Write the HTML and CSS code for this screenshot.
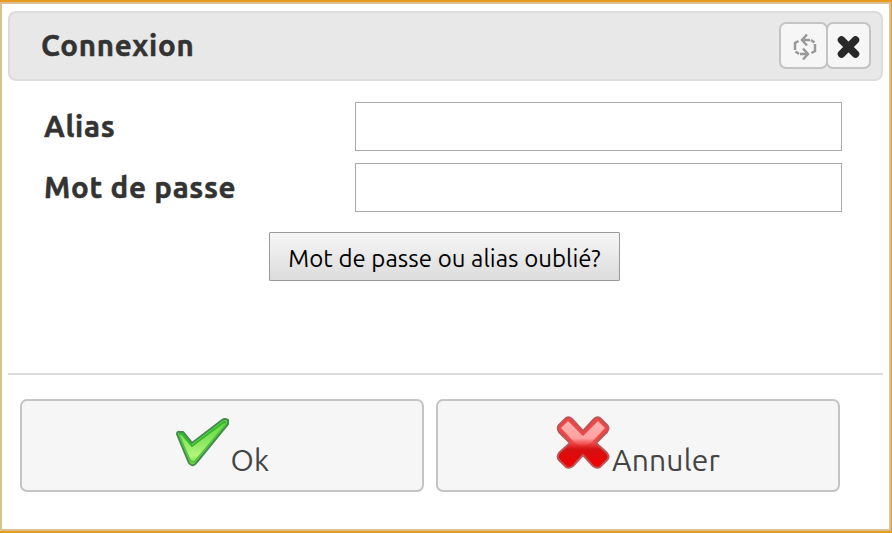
FILE: index.html
```html
<!DOCTYPE html>
<html lang="fr">
<head>
  <meta charset="UTF-8">
  <title>Connexion</title>
  <link rel="stylesheet" href="styles.css">
</head>
<body>

  <div class="dialog">
    <div class="titlebar">
      <h1>Connexion</h1>
      <div class="tools">
        <button class="tool refresh" type="button" aria-label="Actualiser">
          <svg width="26" height="28" viewBox="0 0 26 28" fill="none" stroke="#999" stroke-width="2.5">
            <path d="M6.500 8L3 10V17M3.500 18.500L7 21M8 21H15M11 15.500L16 21L11 26.500"/>
            <path d="M19.500 20L23 18V11M22.500 9.500L19 7M18 7H10M15 12.500L10 7L15 1.500"/>
          </svg>
        </button>
        <button class="tool close" type="button" aria-label="Fermer">
          <svg width="24" height="24" viewBox="0 0 24 24">
            <path d="M4.500 5L18.500 19M18.500 5L4.500 19" stroke="#282828" stroke-width="7.500" stroke-linecap="round"/>
          </svg>
        </button>
      </div>
    </div>

    <form class="fields">
      <label for="alias">Alias</label>
      <input type="text" id="alias">
      <label for="password">Mot de passe</label>
      <input type="password" id="password">
      <button class="forgot" type="button">Mot de passe ou alias oublié?</button>
    </form>

    <div class="actions">
      <button class="action" type="button">
        <svg width="54" height="54" viewBox="0 0 54 54">
          <defs>
            <linearGradient id="green" x1="0" y1="0" x2="0" y2="1">
              <stop offset="0" stop-color="#5fd840"/>
              <stop offset="0.4" stop-color="#82e25a"/>
              <stop offset="0.8" stop-color="#b4f57a"/>
              <stop offset="1" stop-color="#63c543"/>
            </linearGradient>
          </defs>
          <path d="M2 19Q2 16 5 17L8 17L17 28L47 5Q50 3 53 5L53 9L22 47Q18 53 14 48Z" fill="url(#green)" stroke="#438b50" stroke-width="2" stroke-linejoin="round"/>
          <path d="M4 19L7 19L17 31L49 7L51 8" fill="none" stroke="#32b82c" stroke-width="2"/>
          <path d="M51 9L21 45Q18 49 15 45L4 20" fill="none" stroke="#4cc438" stroke-width="1.500"/>
        </svg>
        <span>Ok</span>
      </button>
      <button class="action" type="button">
        <svg width="54" height="54" viewBox="0 0 54 54">
          <defs>
            <linearGradient id="red" x1="0" y1="0" x2="0" y2="1">
              <stop offset="0" stop-color="#f04444"/>
              <stop offset="0.5" stop-color="#ee4848"/>
              <stop offset="0.64" stop-color="#d51010"/>
              <stop offset="1" stop-color="#f40000"/>
            </linearGradient>
            <linearGradient id="shine" x1="0" y1="0" x2="0" y2="1">
              <stop offset="0" stop-color="#ffb4b4"/>
              <stop offset="0.7" stop-color="#ffa0a0"/>
              <stop offset="1" stop-color="#f05050" stop-opacity="0.2"/>
            </linearGradient>
          </defs>
          <path d="M10 3Q13 1 16 4L27 16L38 4Q41 1 44 3L51 10Q54 13 51 17L40 28L51 38Q54 42 51 45L44 52Q41 54 37 51L27 40L17 51Q13 54 10 52L3 45Q0.500 42 3 38L14 28L3 17Q0.500 13 3 10Z" fill="url(#red)" stroke="#bd5555" stroke-width="2"/>
          <path d="M12 6L27 21L42 6L49 13L36 27Q27 35 18 27L5 13Z" fill="url(#shine)"/>
        </svg>
        <span>Annuler</span>
      </button>
    </div>
  </div>

</body>
</html>
```
FILE: styles.css
```css
* {
  box-sizing: border-box;
}

body {
  margin: 0;
  height: 533px;
  padding: 2px 1px 2px 0;
  background: #e79a20;
  font-family: Ubuntu, "Noto Sans", sans-serif;
  color: #333;
}

button {
  font-family: inherit;
  padding: 0;
}

svg {
  display: block;
}

.dialog {
  height: 529px;
  padding: 7px 6px 0;
  border: 2px solid #dac092;
  background: #fff;
}

.titlebar {
  display: flex;
  justify-content: space-between;
  width: 875px;
  height: 70px;
  padding: 9px 10px 0 31px;
  border: 2px solid #dcdcdc;
  border-radius: 8px;
  background: #e8e8e8;
}

h1 {
  margin: 0;
  font-size: 29.5px;
  line-height: 48px;
  letter-spacing: 0.7px;
  -webkit-text-stroke: 0.5px #333;
}

.tools {
  display: flex;
}

.tool {
  display: flex;
  justify-content: center;
  align-items: center;
  height: 47px;
  border: 2px solid #c4c4c4;
  border-radius: 7px;
  background: #f6f6f6;
}

.refresh {
  width: 49px;
  padding: 2px 0 0 3px;
}

.close {
  width: 45px;
  margin-left: -2px;
  padding-top: 2px;
}

.fields {
  display: grid;
  grid-template-columns: 311px 487px;
  grid-auto-rows: 49px;
  align-content: start;
  row-gap: 12px;
  height: 294px;
  width: 875px;
  padding: 21px 0 0 36px;
  border-bottom: 2px solid #dcdcdc;
}

label {
  font-size: 29.5px;
  font-weight: bold;
  line-height: 50px;
  letter-spacing: 0.7px;
  -webkit-text-stroke: 0.5px #333;
}

input {
  border: 1px solid #a9a9a9;
  background: #fff;
  font-size: 24px;
  padding: 0 10px;
}

.forgot {
  grid-column: 1 / 3;
  width: 351px;
  height: 49px;
  margin: 8px 0 0 225px;
  padding-top: 5px;
  border: 1px solid #999;
  border-radius: 1px;
  background: linear-gradient(#f6f6f6, #dcdcdc);
  color: #000;
  font-size: 24px;
  line-height: 42px;
  letter-spacing: 0.06px;
  white-space: nowrap;
}

.actions {
  display: flex;
  gap: 12px;
  padding: 24px 0 0 12px;
}

.action {
  display: flex;
  justify-content: center;
  align-items: flex-start;
  gap: 2px;
  width: 404px;
  height: 93px;
  padding-top: 14px;
  border: 2px solid #c4c4c4;
  border-radius: 7px;
  background: #f6f6f6;
  color: #444;
  font-size: 30px;
}

.action span {
  margin-top: 25px;
  line-height: 40px;
  letter-spacing: 0.2px;
}
```
